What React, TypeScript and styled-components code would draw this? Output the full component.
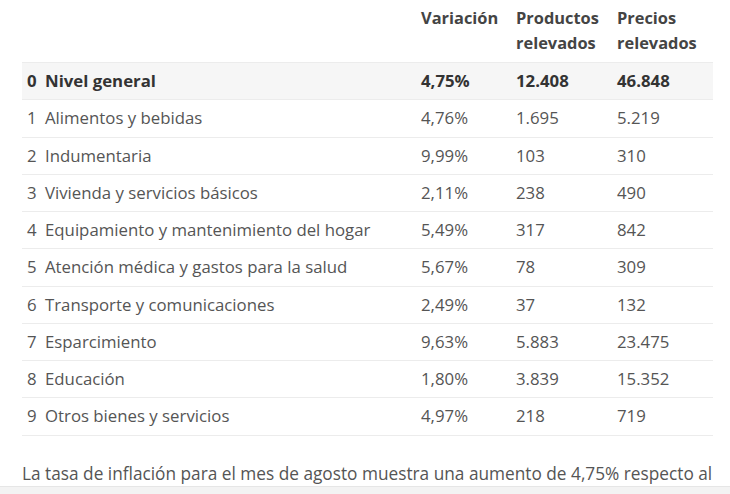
import styled, { createGlobalStyle } from 'styled-components';

const GlobalStyle = createGlobalStyle`
  body {
    margin: 0;
    background: #fff;
    font-family: "Open Sans", "Liberation Sans", sans-serif;
    color: #555;
  }
`;

type Row = { n: number; label: string; variation: string; products: string; prices: string };

const rows: Row[] = [
  { n: 0, label: 'Nivel general', variation: '4,75%', products: '12.408', prices: '46.848' },
  { n: 1, label: 'Alimentos y bebidas', variation: '4,76%', products: '1.695', prices: '5.219' },
  { n: 2, label: 'Indumentaria', variation: '9,99%', products: '103', prices: '310' },
  { n: 3, label: 'Vivienda y servicios básicos', variation: '2,11%', products: '238', prices: '490' },
  { n: 4, label: 'Equipamiento y mantenimiento del hogar', variation: '5,49%', products: '317', prices: '842' },
  { n: 5, label: 'Atención médica y gastos para la salud', variation: '5,67%', products: '78', prices: '309' },
  { n: 6, label: 'Transporte y comunicaciones', variation: '2,49%', products: '37', prices: '132' },
  { n: 7, label: 'Esparcimiento', variation: '9,63%', products: '5.883', prices: '23.475' },
  { n: 8, label: 'Educación', variation: '1,80%', products: '3.839', prices: '15.352' },
  { n: 9, label: 'Otros bienes y servicios', variation: '4,97%', products: '218', prices: '719' },
];

const Page = styled.div`
  padding: 0 17px 0 22px;
`;

const Table = styled.table`
  width: 691px;
  border-collapse: collapse;
  table-layout: fixed;
  font-size: 16.8px;
`;

const HeadCell = styled.th`
  text-align: left;
  vertical-align: top;
  font-weight: 700;
  font-size: 16.4px;
  color: #444;
  line-height: 25px;
  padding: 5px 5px 7px;
`;

const BodyRow = styled.tr<{ $total?: boolean }>`
  background: ${(p) => (p.$total ? '#f6f6f6' : 'transparent')};
  border-top: 1px solid #ececec;
  font-weight: ${(p) => (p.$total ? 700 : 400)};
  color: ${(p) => (p.$total ? '#333' : '#555')};
  &:last-child {
    border-bottom: 1px solid #ececec;
  }
`;

const Cell = styled.td`
  height: 36.25px;
  padding: 0 5px;
  line-height: 22px;
  white-space: nowrap;
`;

const Num = styled.span`
  display: inline-block;
  width: 18px;
`;

const Paragraph = styled.p`
  margin: 26px 0 0;
  font-size: 17.25px;
  line-height: 24px;
  color: #555;
  white-space: nowrap;
`;

const BottomBar = styled.div`
  position: fixed;
  left: 0;
  right: 0;
  bottom: 0;
  height: 7px;
  background: #f3f3f3;
  border-top: 1px solid #e6e6e6;
`;

export default function App() {
  return (
    <>
      <GlobalStyle />
      <Page>
        <Table>
          <colgroup>
            <col style={{ width: 394 }} />
            <col style={{ width: 95 }} />
            <col style={{ width: 101 }} />
            <col style={{ width: 101 }} />
          </colgroup>
          <thead>
            <tr>
              <HeadCell />
              <HeadCell>Variación</HeadCell>
              <HeadCell>Productos relevados</HeadCell>
              <HeadCell>Precios relevados</HeadCell>
            </tr>
          </thead>
          <tbody>
            {rows.map((r) => (
              <BodyRow key={r.n} $total={r.n === 0}>
                <Cell>
                  <Num>{r.n}</Num>
                  {r.label}
                </Cell>
                <Cell>{r.variation}</Cell>
                <Cell>{r.products}</Cell>
                <Cell>{r.prices}</Cell>
              </BodyRow>
            ))}
          </tbody>
        </Table>
        <Paragraph>
          La tasa de inflación para el mes de agosto muestra una aumento de 4,75% respecto al
        </Paragraph>
      </Page>
      <BottomBar />
    </>
  );
}
